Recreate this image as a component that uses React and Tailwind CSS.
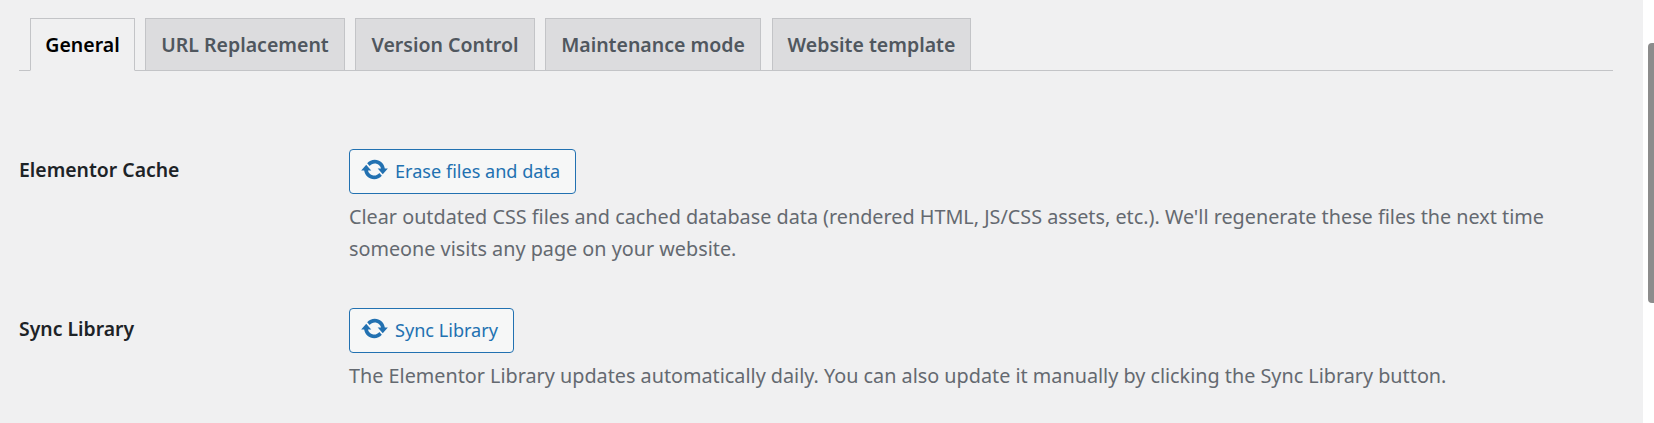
const tabs = [
  { label: "General", width: "w-[105px]" },
  { label: "URL Replacement", width: "w-[200px]" },
  { label: "Version Control", width: "w-[180px]" },
  { label: "Maintenance mode", width: "w-[216px]" },
  { label: "Website template", width: "w-[199px] ml-[1px]" },
];

const sections = [
  {
    label: "Elementor Cache",
    button: "Erase files and data",
    text: "Clear outdated CSS files and cached database data (rendered HTML, JS/CSS assets, etc.). We'll regenerate these files the next time someone visits any page on your website.",
  },
  {
    label: "Sync Library",
    button: "Sync Library",
    text: "The Elementor Library updates automatically daily. You can also update it manually by clicking the Sync Library button.",
  },
];

function UpdateIcon() {
  return (
    <svg viewBox="0 0 20 20" className="w-[29px] h-[29px] -mt-[5px] fill-current shrink-0" aria-hidden="true">
      <path d="M10.2 3.28c3.53 0 6.43 2.61 6.92 6h2.08l-3.5 4-3.5-4h2.32c-.45-1.97-2.21-3.45-4.32-3.45-1.45 0-2.73.71-3.54 1.78L4.95 5.66C6.23 4.2 8.11 3.28 10.2 3.28zm-.4 13.44c-3.52 0-6.43-2.61-6.92-6H.8l3.5-4c1.17 1.33 2.33 2.67 3.5 4H5.48c.45 1.97 2.21 3.45 4.32 3.45 1.45 0 2.73-.71 3.54-1.78l1.71 1.95c-1.28 1.46-3.16 2.38-5.25 2.38z" />
    </svg>
  );
}

function Section({ label, button, text }) {
  return (
    <div className="flex">
      <div className="w-[330px] shrink-0 pt-[8px] text-[19.4px] leading-[26px] font-semibold text-[#1d2327]">{label}</div>
      <div className="w-[1210px]">
        <button className="h-[45px] flex items-center gap-[6px] pl-[10px] pr-[15px] border border-[#2271b1] rounded-[4px] bg-[#f6f7f7] text-[#2271b1] text-[18.1px]">
          <UpdateIcon />
          <span>{button}</span>
        </button>
        <p className="mt-[7px] text-[19.8px] leading-[32px] text-[#646970]">{text}</p>
      </div>
    </div>
  );
}

export default function App() {
  return (
    <div className="flex h-[423px] overflow-hidden bg-[#f0f0f1] font-['Noto_Sans','Open_Sans',sans-serif]">
      <main className="flex-1 pl-[19px] pr-[30px] pt-[18px]">
        <div className="flex gap-[10px] pl-[11px] h-[53px] border-b border-[#c3c4c7]">
          {tabs.map((t, i) => (
            <div
              key={t.label}
              className={`${t.width} ${
                i === 0
                  ? "h-[53px] flex items-center justify-center border border-[#c3c4c7] border-b-[#f0f0f1] bg-[#f0f0f1] text-[19.5px] font-semibold text-black"
                  : "h-[52px] flex items-center justify-center border border-[#c3c4c7] border-b-0 bg-[#dcdcde] text-[19.5px] font-semibold text-[#50575e]"
              }`}
            >
              {t.label}
            </div>
          ))}
        </div>
        <div className="mt-[78px] flex flex-col gap-[43px]">
          {sections.map((s) => (
            <Section key={s.label} {...s} />
          ))}
        </div>
      </main>
      <aside className="w-[11px] shrink-0 bg-white pt-[43px] pl-[5px]">
        <div className="h-[260px] w-[6px] rounded-l-[4px] bg-[#8c8c8c]" />
      </aside>
    </div>
  );
}
